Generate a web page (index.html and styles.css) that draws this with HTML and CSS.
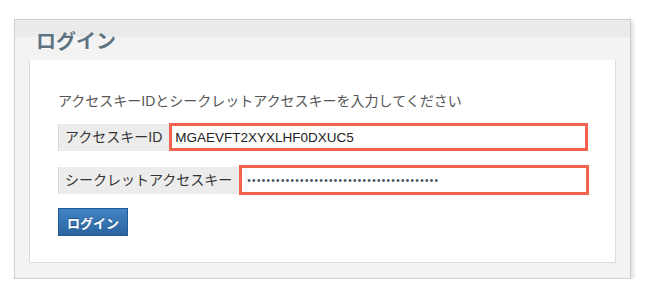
FILE: index.html
```html
<!DOCTYPE html>
<html lang="ja">
<head>
    <meta charset="UTF-8">
    <meta name="viewport" content="width=device-width, initial-scale=1.0">
    <title>ログイン</title>
    <link rel="stylesheet" href="styles.css">
</head>
<body>
    <div class="panel">
        <h2 class="panel-title">ログイン</h2>
        <div class="panel-body">
            <p class="hint">アクセスキーIDとシークレットアクセスキーを入力してください</p>

            <!-- Access key -->
            <div class="field">
                <label for="accessKey" class="field-label">アクセスキーID</label>
                <input type="text" id="accessKey" class="field-input" value="MGAEVFT2XYXLHF0DXUC5">
            </div>

            <!-- Secret key -->
            <div class="field">
                <label for="secretKey" class="field-label">シークレットアクセスキー</label>
                <input type="password" id="secretKey" class="field-input" value="wJalrXUtnFEMIK7MDENGbPxRfiCYEXAMPLEKEY12">
            </div>

            <button type="submit" class="btn-login">ログイン</button>
        </div>
    </div>
</body>
</html>
```

FILE: styles.css
```css
body {
    margin: 0;
    padding: 0;
    background-color: #fff;
    font-family: "Liberation Sans", "Noto Sans CJK JP", sans-serif;
    color: #333;
}
.panel {
    width: 615px;
    margin: 19px 0 0 14px;
    border: 1px solid #cfcfcf;
    background: linear-gradient(to bottom, #ebebeb 0, #ebebeb 17px, #f3f3f3 17px);
    box-shadow: 2px 2px 4px rgba(0,0,0,0.15);
    padding-bottom: 15px;
}
.panel-title {
    margin: 0;
    height: 40px;
    padding-left: 21px;
    font-size: 20px;
    line-height: 44px;
    font-weight: bold;
    color: #5e7382;
    text-shadow: 0 1px 0 #fff;
}
.panel-body {
    margin: 0 14px;
    height: 203px;
    background-color: #fff;
    border: 1px solid #dcdcdc;
    border-top: none;
    padding: 31px 0 0 28px;
    box-sizing: border-box;
}
.hint {
    margin: 0 0 12px;
    font-size: 14px;
    line-height: 20px;
    color: #555;
}
.field {
    display: flex;
    align-items: center;
    width: 530px;
    margin-bottom: 14px;
}
.field-label {
    height: 27px;
    line-height: 27px;
    padding: 0 7px 0 6px;
    background-color: #ececec;
    border-left: 1px solid #d6d6d6;
    font-size: 14px;
    color: #333;
    white-space: nowrap;
}
.field-input {
    flex: 1;
    height: 28px;
    box-sizing: border-box;
    margin: 0;
    padding: 0 3px;
    border: 3px solid #f4634f;
    font-family: "Liberation Sans", sans-serif;
    font-size: 13.5px;
    color: #222;
    outline: none;
}
#secretKey {
    height: 30px;
    margin-right: -1px;
    padding-left: 5px;
    font-size: 10px;
    letter-spacing: 1.3px;
    color: #45505a;
}
.btn-login {
    margin-top: -1px;
    height: 28px;
    padding: 0 8px;
    border: 1px solid #245a91;
    background: linear-gradient(to bottom, #4184c6, #2b649f);
    color: #fff;
    font-family: "Liberation Sans", "Noto Sans CJK JP", sans-serif;
    font-size: 13px;
    font-weight: bold;
    text-shadow: 0 -1px 0 rgba(0,0,0,0.3);
    cursor: pointer;
}
```
